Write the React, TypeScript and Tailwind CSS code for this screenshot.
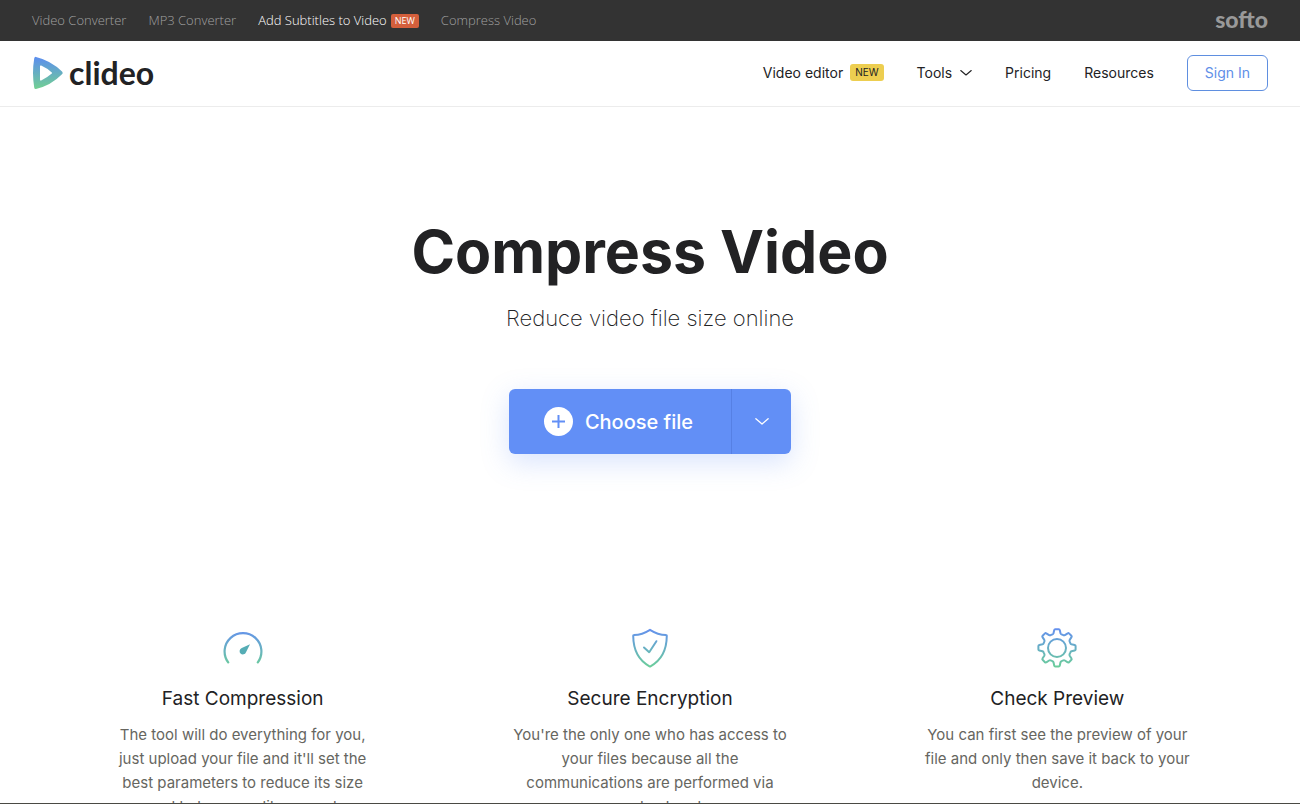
import type { ReactNode } from "react";

interface Feature {
  icon: ReactNode;
  title: string;
  text: string;
}

const promoLinks = [
  { label: "Video Converter" },
  { label: "MP3 Converter" },
  { label: "Add Subtitles to Video", isNew: true },
  { label: "Compress Video" },
];

function Gradient({ id }: { id: string }) {
  return (
    <defs>
      <linearGradient id={id} x1="0" y1="0" x2="0" y2="40" gradientUnits="userSpaceOnUse">
        <stop offset="0" stopColor="#648ff0" />
        <stop offset="1" stopColor="#6bcf98" />
      </linearGradient>
    </defs>
  );
}

function SpeedIcon() {
  return (
    <svg viewBox="0 0 40 40" className="size-10" fill="none" aria-hidden="true">
      <Gradient id="speed" />
      <path
        d="M5.2 34.4A18.4 18.4 0 1 1 34.8 34.4"
        stroke="url(#speed)"
        strokeWidth="2.2"
        strokeLinecap="round"
      />
      <path d="M27 16.200 23 24.200a3.300 3.300 0 1 1-4.200-4.200Z" fill="#55adb5" />
    </svg>
  );
}

function ShieldIcon() {
  return (
    <svg viewBox="0 0 40 40" className="size-10" fill="none" aria-hidden="true">
      <Gradient id="shield" />
      <g stroke="url(#shield)" strokeWidth="2" strokeLinecap="round" strokeLinejoin="round">
        <path d="M20 1.800C15.500 4.700 9.500 6.900 4 7.100c-.5 0-.8.300-.8.700C3.300 21 8 32 19.500 38.300c.4.200.7.200 1 0C32 32 36.700 21 36.800 7.800c0-.4-.3-.7-.8-.7C30.500 6.900 24.500 4.700 20 1.800Z" />
        <path d="m14 19.500 5.200 4.700 7.200-11" />
      </g>
    </svg>
  );
}

function GearIcon() {
  return (
    <svg viewBox="0 0 40 40" className="size-10" fill="none" aria-hidden="true">
      <Gradient id="gear" />
      <g stroke="url(#gear)" strokeWidth="2" strokeLinejoin="round">
        <circle cx="20" cy="20" r="9" />
        <path d="M18.300 1.200h3.400q.9 0 1.100.9l.7 3.200q.2.800 1 1.100l1.900.8q.8.300 1.500-.1l2.800-1.800q.7-.5 1.300.1l2.400 2.400q.6.600.1 1.300l-1.800 2.800q-.4.700-.1 1.500l.8 1.900q.3.800 1.100 1l3.200.7q.9.200.9 1.100v3.400q0 .9-.9 1.100l-3.200.7q-.8.200-1.100 1l-.8 1.900q-.3.800.1 1.500l1.800 2.800q.5.700-.1 1.300l-2.400 2.400q-.6.600-1.300.1l-2.800-1.800q-.7-.4-1.500-.1l-1.900.8q-.8.300-1 1.100l-.7 3.200q-.2.900-1.100.9h-3.400q-.9 0-1.100-.9l-.7-3.200q-.2-.8-1-1.100l-1.900-.8q-.8-.3-1.500.1l-2.800 1.800q-.7.500-1.300-.1l-2.400-2.400q-.6-.6-.1-1.300l1.800-2.800q.4-.7.1-1.500l-.8-1.900q-.3-.8-1.100-1l-3.200-.7q-.9-.2-.9-1.100v-3.400q0-.9.9-1.100l3.200-.7q.8-.2 1.100-1l.8-1.900q.3-.8-.1-1.500l-1.800-2.800q-.5-.7.1-1.300l2.400-2.400q.6-.6 1.300-.1l2.800 1.800q.7.400 1.500.1l1.900-.8q.8-.3 1-1.100l.7-3.200q.2-.9 1.100-.9Z" />
      </g>
    </svg>
  );
}

function ChevronDown({ className }: { className: string }) {
  return (
    <svg viewBox="0 0 16 10" className={className} fill="none" aria-hidden="true">
      <path d="m1 2 7 6 7-6" stroke="currentColor" strokeWidth="1.500" strokeLinecap="round" strokeLinejoin="round" />
    </svg>
  );
}

function Logo() {
  return (
    <a href="#" className="flex items-center gap-1.5" aria-label="clideo">
      <svg viewBox="0 0 31 34" className="h-[34px] w-[31px]" aria-hidden="true">
        <defs>
          <linearGradient id="logo" x1="0" y1="0" x2="0" y2="1">
            <stop offset="0" stopColor="#5b8df0" />
            <stop offset="1" stopColor="#72d092" />
          </linearGradient>
        </defs>
        <path
          fill="url(#logo)"
          fillRule="evenodd"
          d="M4 .9Q19 4.500 30 15.500q1.300 1.400 0 2.800Q19 29.500 4 33q-1.500.3-1.800-1.500-2.400-14.500 0-29Q2.500.6 4 .9ZM8 10.300v13.400q0 1.300 1.200.7Q15.500 21.500 19.800 17.600q.6-.5 0-1Q15.500 12.500 9.200 9.600 8 9 8 10.300Z"
        />
      </svg>
      <span className="font-[Lato,sans-serif] text-[32px] leading-8 font-bold text-[#222224]">clideo</span>
    </a>
  );
}

const features: Feature[] = [
  {
    icon: <SpeedIcon />,
    title: "Fast Compression",
    text: "The tool will do everything for you, just upload your file and it'll set the best parameters to reduce its size and\u00a0to keep quality normal",
  },
  {
    icon: <ShieldIcon />,
    title: "Secure Encryption",
    text: "You're the only one who has access to your files because all the communications are performed via secured networks",
  },
  {
    icon: <GearIcon />,
    title: "Check Preview",
    text: "You can first see the preview of your file and only then save it back to your device.",
  },
];

export default function App() {
  return (
    <div className="min-h-screen bg-white font-[Inter,sans-serif] text-[#222224]">
      {/* Promo bar */}
      <div className="flex h-[41px] items-center justify-between bg-[#333] px-8">
        <nav className="flex items-center gap-[22px] font-['Open_Sans',sans-serif] text-[13px] font-light">
          {promoLinks.map((link) => (
            <a
              key={link.label}
              href="#"
              className={link.isNew ? "flex items-center gap-1 text-white" : "text-[#a0a0a0]"}
            >
              {link.label}
              {link.isNew && (
                <span className="rounded-xs bg-[#d45f3c] px-1 text-[9px] leading-[14px] font-normal">NEW</span>
              )}
            </a>
          ))}
        </nav>
        <a href="#" className="pb-1 font-[Lato,sans-serif] text-[23px] leading-6 font-black text-[#999]">
          softo
        </a>
      </div>

      {/* Header */}
      <header className="flex h-[66px] items-center justify-between border-b border-[#ececec] px-8 pb-0.5">
        <Logo />
        <nav className="flex items-center gap-[33px] text-sm">
          <a href="#" className="flex items-center gap-[7px]">
            Video editor
            <span className="rounded-[3px] bg-[#edce50] px-[5px] text-[10px] leading-[17px]">NEW</span>
          </a>
          <button type="button" className="flex items-center gap-2">
            Tools
            <ChevronDown className="w-3" />
          </button>
          <a href="#">Pricing</a>
          <a href="#">Resources</a>
          <a href="#" className="rounded-md border border-[#5f8fe0] px-[17px] py-[7px] text-[#5f8fe8]">
            Sign In
          </a>
        </nav>
      </header>

      <main>
        {/* Hero */}
        <section className="flex flex-col items-center pt-[107px] text-center">
          <h1 className="text-[59px] leading-[76px] font-bold">Compress Video</h1>
          <p className="mt-3.5 text-[22px] leading-7 font-extralight">Reduce video file size online</p>
          <div className="mt-[57px] flex h-[65px] rounded-md bg-[#628ff6] text-white shadow-[0_8px_28px_rgba(98,143,246,0.25)]">
            <button type="button" className="flex items-center gap-3 pr-[38px] pl-[35px] text-xl font-medium">
              <svg viewBox="0 0 29 29" className="size-[29px]" aria-hidden="true">
                <circle cx="14.500" cy="14.500" r="14.500" fill="#fff" />
                <path d="M14.500 8v13M8 14.500h13" stroke="#628ff6" strokeWidth="2" />
              </svg>
              Choose file
            </button>
            <button
              type="button"
              aria-label="More sources"
              className="flex w-[60px] items-center justify-center border-l border-[#5680e4]"
            >
              <ChevronDown className="w-3.5" />
            </button>
          </div>
        </section>

        {/* Features */}
        <section className="mt-[174px] grid grid-cols-3 px-[39px] pb-20">
          {features.map((feature) => (
            <div key={feature.title} className="flex flex-col items-center text-center">
              {feature.icon}
              <h2 className="mt-[19px] text-[19px] leading-6 font-normal">{feature.title}</h2>
              <p className="mt-3 w-[275px] text-[15px] leading-6 text-[#66665f]">{feature.text}</p>
            </div>
          ))}
        </section>
      </main>

      <div className="fixed inset-x-0 bottom-0 h-px bg-[#4a4a44]" />
    </div>
  );
}
